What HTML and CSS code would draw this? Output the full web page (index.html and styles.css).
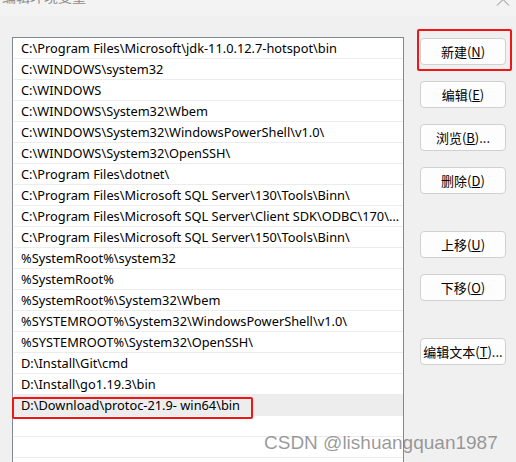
FILE: index.html
```html
<!DOCTYPE html>
<html lang="zh-CN">
<head>
<meta charset="utf-8">
<title>编辑环境变量</title>
<link rel="stylesheet" href="styles.css">
</head>
<body>
<div class="titlebar">
  <span class="title">编辑环境变量</span>
  <svg class="chev" width="14" height="8" viewBox="0 0 14 8"><path d="M1 7.5 L7 1.5 L13 7.5" fill="none" stroke="#8a8a8a" stroke-width="1"/></svg>
</div>
<div class="main">
  <div class="listbox">
    <div class="row">C:\Program Files\Microsoft\jdk-11.0.12.7-hotspot\bin</div>
    <div class="row">C:\WINDOWS\system32</div>
    <div class="row">C:\WINDOWS</div>
    <div class="row">C:\WINDOWS\System32\Wbem</div>
    <div class="row">C:\WINDOWS\System32\WindowsPowerShell\v1.0\</div>
    <div class="row">C:\WINDOWS\System32\OpenSSH\</div>
    <div class="row">C:\Program Files\dotnet\</div>
    <div class="row">C:\Program Files\Microsoft SQL Server\130\Tools\Binn\</div>
    <div class="row">C:\Program Files\Microsoft SQL Server\Client SDK\ODBC\170\Tools\Binn\</div>
    <div class="row">C:\Program Files\Microsoft SQL Server\150\Tools\Binn\</div>
    <div class="row">%SystemRoot%\system32</div>
    <div class="row">%SystemRoot%</div>
    <div class="row">%SystemRoot%\System32\Wbem</div>
    <div class="row">%SYSTEMROOT%\System32\WindowsPowerShell\v1.0\</div>
    <div class="row">%SYSTEMROOT%\System32\OpenSSH\</div>
    <div class="row">D:\Install\Git\cmd</div>
    <div class="row">D:\Install\go1.19.3\bin</div>
    <div class="row selected">D:\Download\protoc-21.9- win64\bin<span class="mark mark-row"></span></div>
    <div class="row"></div>
    <div class="row"></div>
  </div>
  <div class="buttons">
    <div class="btn-wrap"><button class="btn">新建(<u>N</u>)</button><span class="mark mark-btn"></span></div>
    <button class="btn">编辑(<u>E</u>)</button>
    <button class="btn">浏览(<u>B</u>)...</button>
    <button class="btn">删除(<u>D</u>)</button>
    <button class="btn group">上移(<u>U</u>)</button>
    <button class="btn">下移(<u>O</u>)</button>
    <button class="btn group">编辑文本(<u>T</u>)...</button>
  </div>
</div>
<div class="watermark">CSDN @lishuangquan1987</div>
</body>
</html>
```
FILE: styles.css
```css
html, body {
  margin: 0;
  padding: 0;
}
body {
  width: 516px;
  height: 462px;
  overflow: hidden;
  background: #f0f0f0;
  font-family: "Noto Sans", "Noto Sans CJK SC", sans-serif;
  font-size: 12.8px;
  color: #000;
  position: relative;
}
.titlebar {
  height: 16px;
  display: flex;
  align-items: flex-end;
  justify-content: space-between;
  overflow: hidden;
  background: #f3f3f3;
  padding: 0 6px 0 2px;
}
.title {
  font-family: "Noto Sans CJK SC", sans-serif;
  font-size: 14px;
  line-height: 20px;
  color: #8c8c8c;
  margin-bottom: 10px;
}
.chev {
  align-self: flex-start;
  margin-top: -2px;
}
.main {
  display: flex;
  align-items: flex-start;
  padding: 21px 0 0 12px;
}
.listbox {
  width: 389px;
  height: 440px;
  border: 1px solid #828790;
  background: #fff;
  padding-left: 1px;
  flex: none;
}
.row {
  height: 21px;
  line-height: 21px;
  border-bottom: 1px solid #ececec;
  box-sizing: border-box;
  padding: 0 2px 0 7px;
  white-space: nowrap;
  overflow: hidden;
  text-overflow: ellipsis;
  position: relative;
}
.row.selected {
  background: #ededed;
  overflow: visible;
}
.mark {
  position: absolute;
  border: 2px solid #f01616;
  border-radius: 2px;
  box-sizing: border-box;
  pointer-events: none;
}
.mark-row {
  left: -2px;
  top: 2px;
  width: 241px;
  height: 22px;
}
.buttons {
  display: flex;
  flex-direction: column;
  gap: 16px;
  margin-left: 16px;
  margin-top: 1px;
}
.btn-wrap {
  position: relative;
}
.mark-btn {
  left: -3px;
  top: -9px;
  width: 95px;
  height: 42px;
}
.btn {
  width: 86px;
  height: 27px;
  box-sizing: border-box;
  border: 1px solid #d0d0d0;
  border-radius: 4px;
  background: #fdfdfd;
  font-family: "Noto Sans CJK SC", sans-serif;
  font-size: 13px;
  color: #000;
  padding: 0;
  display: block;
}
.btn u {
  text-underline-offset: 1px;
}
.btn.group {
  margin-top: 21px;
}
.watermark {
  position: absolute;
  left: 264px;
  top: 432px;
  font-family: "Liberation Sans", sans-serif;
  font-size: 19px;
  color: rgba(120, 120, 120, 0.75);
  white-space: nowrap;
}
```
